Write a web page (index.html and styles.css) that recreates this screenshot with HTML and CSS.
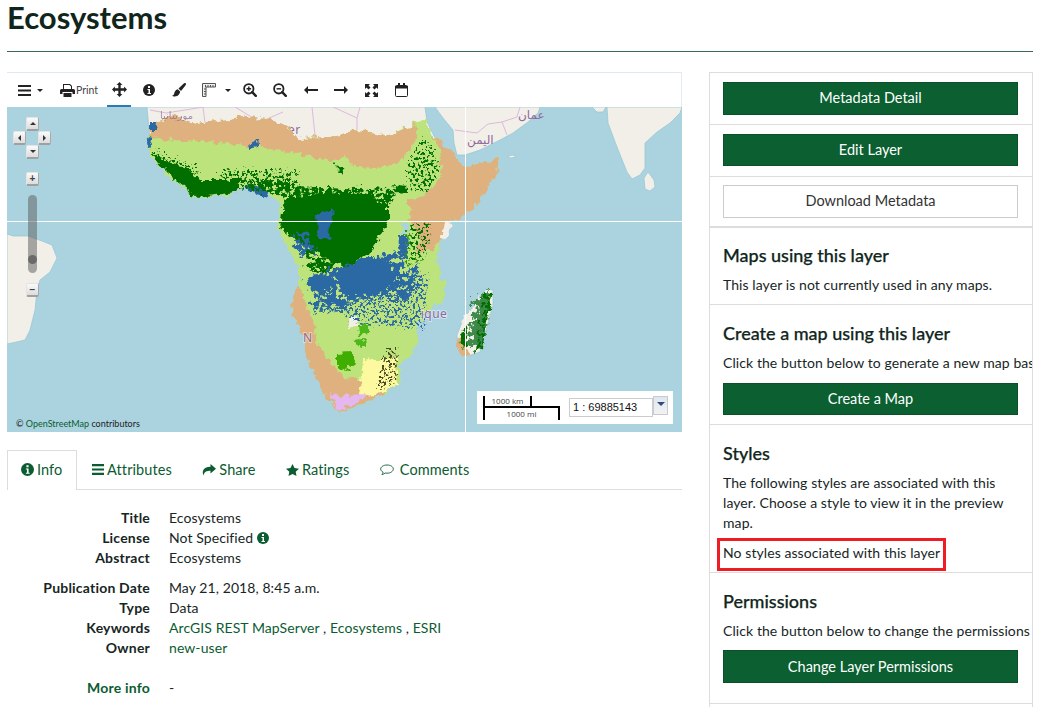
FILE: index.html
```html
<!DOCTYPE html>
<html lang="en">
<head>
<meta charset="utf-8">
<title>Ecosystems</title>
<link rel="stylesheet" href="styles.css">
</head>
<body>
<svg class="defs" width="0" height="0" aria-hidden="true">
  <defs>
    <filter id="rough" x="-5%" y="-5%" width="110%" height="110%" color-interpolation-filters="sRGB">
      <feTurbulence type="fractalNoise" baseFrequency="0.16" numOctaves="3" seed="4" result="n"/>
      <feDisplacementMap in="SourceGraphic" in2="n" scale="9" xChannelSelector="R" yChannelSelector="G"/>
    </filter>
    <filter id="mottle" x="-5%" y="-5%" width="110%" height="110%" color-interpolation-filters="sRGB">
      <feTurbulence type="fractalNoise" baseFrequency="0.22" numOctaves="3" seed="11" result="n"/>
      <feDisplacementMap in="SourceGraphic" in2="n" scale="16" xChannelSelector="R" yChannelSelector="G" result="d"/>
      <feColorMatrix in="n" type="matrix" values="0 0 0 0 0 0 0 0 0 0 0 0 0 0 0 9 9 0 0 -7.6" result="m"/>
      <feComposite in="d" in2="m" operator="in"/>
    </filter>
    <filter id="sparse" x="-5%" y="-5%" width="110%" height="110%" color-interpolation-filters="sRGB">
      <feTurbulence type="fractalNoise" baseFrequency="0.38" numOctaves="3" seed="37" result="n"/>
      <feDisplacementMap in="SourceGraphic" in2="n" scale="14" xChannelSelector="R" yChannelSelector="G" result="d"/>
      <feColorMatrix in="n" type="matrix" values="0 0 0 0 0 0 0 0 0 0 0 0 0 0 0 10 10 0 0 -10.4" result="m"/>
      <feComposite in="d" in2="m" operator="in"/>
    </filter>
  </defs>
</svg>
<header class="page-head">
  <h1>Ecosystems</h1>
</header>
<main class="content">
  <section class="left">
    <div class="toolbar">
      <span class="tool tool-menu">
        <svg width="13" height="11" viewBox="0 0 13 11"><path d="M0 0h13v2H0zM0 4.500h13v2H0zM0 9h13v2H0z" fill="#222"/></svg>
        <i class="caret"></i>
      </span>
      <span class="tool tool-print">
        <svg width="15" height="13" viewBox="0 0 15 13"><path d="M3 0h7l2 2v3H3zM4 1v4h7V2.500L9.500 1zM1.500 5h12A1.500 1.500 0 0 1 15 6.500V10h-2.500V8h-10v2H0V6.500A1.500 1.500 0 0 1 1.500 5zM3.500 9h8v4h-8z" fill="#222"/></svg>
        <span>Print</span>
      </span>
      <span class="tool active">
        <svg width="15" height="15" viewBox="0 0 14 14"><path d="M7 0l2.700 2.700H8.100V5.900h3.200V4.300L14 7l-2.700 2.700V8.100H8.100v3.200h1.600L7 14l-2.700-2.700h1.600V8.100H2.700v1.600L0 7l2.700-2.700v1.600h3.200V2.700H4.300z" fill="#222"/></svg>
      </span>
      <span class="tool">
        <svg width="12" height="12" viewBox="0 0 12 12"><circle cx="6" cy="6" r="6" fill="#222"/><path d="M5 2h2v2H5zM4.500 5H7v4h1v1H4.500V9h1V6h-1z" fill="#fff"/></svg>
      </span>
      <span class="tool">
        <svg width="14" height="14" viewBox="0 0 14 14"><path d="M13 0c.7 0 1 .5 1 1 0 .6-.4 1.200-1 2L9 8 6.500 5.500 11.500.8C12 .3 12.500 0 13 0zM5.800 6.300l2.300 2.300C7.900 11 6.300 13.500 2.800 13.500c-1.300 0-2.300-.3-2.800-.8 1.200-.2 1.800-.8 2.200-2.200.4-2 1.600-4 3.600-4.200z" fill="#222"/></svg>
      </span>
      <span class="tool tool-ruler">
        <svg width="14" height="14" viewBox="0 0 14 14"><path d="M.5.500h13v3.500H4v9.500H.5z" fill="#eee" stroke="#555"/><path d="M3.500 2v2M6 2v2M8.500 2v2M11 2v2M2 6h2M2 8.500h2M2 11h2" stroke="#555" fill="none"/></svg>
        <i class="caret"></i>
      </span>
      <span class="tool">
        <svg width="14" height="14" viewBox="0 0 14 14"><circle cx="5.800" cy="5.800" r="4.700" fill="none" stroke="#222" stroke-width="1.800"/><path d="M9.200 9.200l3.600 3.600" stroke="#222" stroke-width="2.400" stroke-linecap="round"/><path d="M3.500 5.800h4.600M5.800 3.500v4.600" stroke="#222" stroke-width="1.400"/></svg>
      </span>
      <span class="tool">
        <svg width="14" height="14" viewBox="0 0 14 14"><circle cx="5.800" cy="5.800" r="4.700" fill="none" stroke="#222" stroke-width="1.800"/><path d="M9.200 9.200l3.600 3.600" stroke="#222" stroke-width="2.400" stroke-linecap="round"/><path d="M3.500 5.800h4.600" stroke="#222" stroke-width="1.400"/></svg>
      </span>
      <span class="tool tool-shift">
        <svg width="14" height="8" viewBox="0 0 14 8"><path d="M14 3v2H4v3L0 4l4-4v3z" fill="#222"/></svg>
      </span>
      <span class="tool">
        <svg width="14" height="8" viewBox="0 0 14 8"><path d="M0 3v2h10v3l4-4-4-4v3z" fill="#222"/></svg>
      </span>
      <span class="tool">
        <svg width="13" height="13" viewBox="0 0 13 13"><path d="M0 0h5L3.500 1.500 5.500 3.500 3.500 5.500 1.500 3.500 0 5zM13 0v5l-1.500-1.500-2 2-2-2 2-2L8 0zM0 13V8l1.500 1.500 2-2 2 2-2 2L5 13zM13 13H8l1.500-1.500-2-2 2-2 2 2L13 8z" fill="#222"/></svg>
      </span>
      <span class="tool">
        <svg width="13" height="14" viewBox="0 0 13 14"><path d="M1.500 2.500h10a1 1 0 0 1 1 1v9a1 1 0 0 1-1 1h-10a1 1 0 0 1-1-1v-9a1 1 0 0 1 1-1z" fill="#fff" stroke="#222"/><path d="M0 3h13v2.500H0zM3 0h2v3.500H3zM8 0h2v3.500H8z" fill="#222"/></svg>
      </span>
    </div>

    <div class="map">
      <svg class="map-art" viewBox="7 107 675 325" width="675" height="325" aria-hidden="true">
        <rect x="7" y="107" width="675" height="325" fill="#aad3df"/>
        <!-- land base -->
        <g class="land">
          <path d="M147 107H425L427 122 436 140 420 160 300 170 180 170 150 140z"/>
          <path d="M435 107L443 118 453 130 454 143 457 155 465 155 480 150 500 140 513 133 528 122 538 113 540 107z"/>
          <path d="M592 107L597 112 603 112 606 107z"/>
          <path d="M607 107L608 123 617 147 627 172 632 179 640 175 645 168 645 143 657 132 670 123 680 113 682 107z"/>
          <path d="M644 178L648 172 654 180 655 187 650 191 645 189z"/>
          <path d="M507 156L513 155 516 157 511 158z"/>
          <path d="M7 234L13 236 28 236 42 241 52 245 57 258 50 272 40 280 37 290 35 310 30 330 25 340 12 343 7 344z"/>
          <path d="M462 322L486 289 493 290 493 305 480 352 468 356 458 350 457 335z"/>
        </g>
        <!-- borders -->
        <g class="border">
          <path d="M150 110L166 113 204 107"/>
          <path d="M203 107L205 123"/>
          <path d="M235 107L260 122 283 112"/>
          <path d="M312 107L315 135"/>
          <path d="M333 107L357 118 360 107"/>
          <path d="M357 118V130"/>
          <path d="M455 130L477 133 488 124 502 122 517 117 520 107"/>
          <path d="M502 122L507 135"/>
        </g>
        <text class="map-label" x="284" y="134" text-anchor="middle">Niger</text>
        <text class="map-label" x="467" y="144">اليمن</text>
        <text class="map-label" x="518" y="119">عمان</text>
        <!-- biomes -->
        <g filter="url(#rough)">
          <path d="M151 124L173 115 197 123 230 120 243 115 270 120 284 124 297 138 330 137 357 130 390 135 417 122 424 120 433 135 447 148 458 160 463 166 483 163 499 158 497 172 482 197 465 215 449 222 442 238 436 262 445 285 445 298 426 315 416 325 418 345 400 365 400 382 383 395 352 408 338 412 325 396 308 362 301 332 291 308 298 285 298 268 278 228 281 205 263 188 243 188 227 195 197 198 170 178 150 155 147 143z" fill="#bce37c"/>
          <path d="M151 124L173 115 197 123 230 120 243 115 270 120 284 124 297 138 330 137 357 130 390 135 415 124 418 137 410 150 397 164 375 168 352 165 345 157 330 162 297 153 263 148 200 141 163 139 148 136z" fill="#dfb17e"/>
          <path d="M432 136L449 148 458 160 463 166 483 163 499 158 497 172 482 197 465 215 449 222 442 238 432 250 416 256 420 236 412 225 408 200 425 195 442 175 440 150z" fill="#dfb17e"/>
          <path d="M291 308L298 285 304 300 315 325 318 345 332 365 345 378 370 380 395 378 383 395 352 408 338 412 325 396 308 362 301 332z" fill="#dfb17e"/>
          <path d="M458 338L466 348 472 355 462 356 456 345z" fill="#dfb17e"/>
          <path d="M445 224L452 222 444 240 440 238z" fill="#f2efe9"/>
          <path d="M401 223L408 222 408 231 402 233z" fill="#aad3df"/>
          <path d="M349 318L357 316 357 327 349 328z" fill="#f2efe9"/>
          <path d="M462 322L482 295 478 310 470 328z" fill="#f2efe9"/>
          <path d="M287 197L320 193 360 194 388 205 388 220 383 232 370 252 347 268 330 262 303 245 280 228 283 205z" fill="#006f00"/>
          <path d="M152 152L170 163 185 167 200 180 225 180 240 180 236 192 215 195 197 197 175 180 160 165z" fill="#006f00"/>
          <path d="M317 214L333 209 331 222 328 232 332 240 318 238z" fill="#2b69a4"/>
          <path d="M335 272L365 258 385 258 398 278 378 294 345 296z" fill="#2b69a4"/>
          <path d="M308 276L332 274 330 290 312 292z" fill="#2b69a4"/>
          <path d="M398 234L407 234 409 258 400 258z" fill="#2b69a4"/>
          <path d="M243 184L262 186 270 198 258 195 245 188z" fill="#2b69a4"/>
          <path d="M150 122L156 122 155 130 150 130zM149 137L154 138 150 148 146 143z" fill="#2b69a4"/>
          <path d="M250 145L257 137 258 148 249 150z" fill="#2b69a4"/>
          <path d="M393 185L408 187 408 193 395 192z" fill="#006f00"/>
          <path d="M335 164L345 168 342 174z" fill="#006f00"/>
          <path d="M363 358L395 360 397 385 375 395 357 397 362 375z" fill="#fdf9a0"/>
          <path d="M329 393L345 396 370 395 350 406 337 410z" fill="#e4b7f0"/>
          <path d="M337 353L352 352 355 362 345 371 337 366z" fill="#3fae00"/>
          <path d="M357 325L370 325 370 334 358 335z" fill="#4db81a"/>
          <path d="M354 340L364 338 365 346 358 346z" fill="#4db81a"/>
          <path d="M484 293L492 294 482 348 475 352 478 320z" fill="#006f00"/>
          <path d="M459 338L465 326 468 345 463 350z" fill="#006f00"/>
        </g>
        <g filter="url(#mottle)">
          <path d="M287 187L398 190 390 205 287 205z" fill="#006f00"/>
          <path d="M240 180L290 182 290 198 250 190z" fill="#006f00"/>
          <path d="M292 236L308 232 320 262 300 256z" fill="#2b69a4"/>
          <path d="M310 302L345 300 352 311 315 312z" fill="#2b69a4"/>
          <path d="M388 295L418 262 420 285 408 302z" fill="#2b69a4"/>
          <path d="M305 250L340 265 330 280 310 270z" fill="#006f00"/>
          <path d="M330 270L405 250 406 296 345 304 318 300 306 282z" fill="#2b69a4"/>
          <path d="M474 300L490 292 482 348 468 345z" fill="#3f8a4a"/>
        </g>
        <g filter="url(#sparse)">
          <path d="M425 138L436 152 440 175 430 192 412 192 408 170z" fill="#006f00"/>
          <path d="M425 138L436 152 440 175 430 192 412 192 408 170z" fill="#006f00"/>
          <path d="M425 138L436 152 440 175 430 192 412 192 408 170z" fill="#006f00"/>
          <path d="M406 232L428 228 424 262 408 268z" fill="#2e9a00"/>
          <path d="M410 226L432 224 428 255 414 262z" fill="#006f00"/>
          <path d="M386 350L398 350 397 385 378 392z" fill="#4a4a20"/>
          <path d="M220 170L300 172 300 192 220 190z" fill="#006f00"/>
          <path d="M330 305L430 275 425 330 360 325z" fill="#2b69a4"/>
          <path d="M152 150L200 170 200 180 160 165z" fill="#006f00"/>
        </g>
        <text class="map-label halo" x="434" y="318" text-anchor="middle">ique</text>
        <text class="map-label halo" x="303" y="342">N</text>
        <text class="map-label faint" x="160" y="119">موريتانيا</text>
        <path d="M7 221.500H682M465.500 107V432" stroke="#fff" stroke-width="1"/>
      </svg>

      <div class="pan-controls">
        <span class="olbtn up"><i class="tri tri-up"></i></span>
        <span class="olbtn left"><i class="tri tri-left"></i></span>
        <span class="olbtn right"><i class="tri tri-right"></i></span>
        <span class="olbtn down"><i class="tri tri-down"></i></span>
      </div>
      <div class="zoom-controls">
        <span class="olbtn">+</span>
        <div class="slider"><i class="knob"></i></div>
        <span class="olbtn">−</span>
      </div>
      <div class="attribution">© <a href="#">OpenStreetMap</a> contributors</div>
      <div class="scale-box">
        <div class="scale-line">
          <span class="km">1000 km</span>
          <span class="mi">1000 mi</span>
        </div>
        <div class="scale-input">1 : 69885143</div>
        <span class="scale-arrow"><i></i></span>
      </div>
    </div>

    <nav class="tabs">
      <a class="tab active" href="#">
        <svg width="13" height="13" viewBox="0 0 12 12"><circle cx="6" cy="6" r="6" fill="#0b5c31"/><path d="M5 2h2v2H5zM4.500 5H7v4h1v1H4.500V9h1V6h-1z" fill="#fff"/></svg>
        Info</a>
      <a class="tab" href="#">
        <svg width="12" height="11" viewBox="0 0 12 11"><path d="M0 0h12v2.200H0zM0 4.400h12v2.200H0zM0 8.800h12V11H0z" fill="#0b5c31"/></svg>
        Attributes</a>
      <a class="tab" href="#">
        <svg width="14" height="12" viewBox="0 0 14 12"><path d="M8.500 0L14 4.700 8.500 9.500V6.800C5 6.800 2.300 7.500 1.500 11.500 0 8.500.3 3 8.500 2.800z" fill="#0b5c31"/></svg>
        Share</a>
      <a class="tab" href="#">
        <svg width="13" height="12" viewBox="0 0 13 12"><path d="M6.500 0l2 4.100 4.500.6-3.300 3.100.8 4.200-4-2.100-4 2.100.8-4.200L0 4.700l4.500-.6z" fill="#0b5c31"/></svg>
        Ratings</a>
      <a class="tab tab-wide" href="#">
        <svg width="14" height="12" viewBox="0 0 14 12"><path d="M7 1C3.500 1 .7 2.800.7 5c0 1.300 1 2.400 2.400 3.200-.1.900-.6 1.700-1.200 2.300 1.300-.1 2.500-.7 3.300-1.500.6.100 1.200.2 1.800.2 3.500 0 6.300-1.900 6.300-4.200S10.500 1 7 1z" fill="none" stroke="#0b5c31" stroke-width=".9"/></svg>
        Comments</a>
    </nav>

    <dl class="info">
      <dt>Title</dt><dd>Ecosystems</dd>
      <dt>License</dt><dd>Not Specified <svg class="inline-icon" width="12" height="12" viewBox="0 0 12 12"><circle cx="6" cy="6" r="6" fill="#0b5c31"/><path d="M5 2h2v2H5zM4.500 5H7v4h1v1H4.500V9h1V6h-1z" fill="#fff"/></svg></dd>
      <dt>Abstract</dt><dd>Ecosystems</dd>
      <dt class="group">Publication Date</dt><dd class="group">May 21, 2018, 8:45 a.m.</dd>
      <dt>Type</dt><dd>Data</dd>
      <dt>Keywords</dt><dd><a href="#">ArcGIS REST MapServer</a> , <a href="#">Ecosystems</a> , <a href="#">ESRI</a></dd>
      <dt>Owner</dt><dd><a href="#">new-user</a></dd>
      <dt class="more"><a href="#">More info</a></dt><dd class="more">-</dd>
    </dl>
  </section>

  <aside class="side">
    <div class="side-row"><a class="btn primary tall" href="#">Metadata Detail</a></div>
    <div class="side-row"><a class="btn primary" href="#">Edit Layer</a></div>
    <div class="side-row thick"><a class="btn outline tall" href="#">Download Metadata</a></div>
    <div class="side-block first">
      <h3>Maps using this layer</h3>
      <p>This layer is not currently used in any maps.</p>
    </div>
    <div class="side-block">
      <h3>Create a map using this layer</h3>
      <p class="clip">Click the button below to generate a new map based on this layer.</p>
      <a class="btn primary" href="#">Create a Map</a>
    </div>
    <div class="side-block">
      <h3>Styles</h3>
      <p>The following styles are associated with this layer. Choose a style to view it in the preview map.</p>
      <p class="flagged">No styles associated with this layer</p>
    </div>
    <div class="side-block last">
      <h3>Permissions</h3>
      <p class="clip tight">Click the button below to change the permissions of this layer.</p>
      <a class="btn primary tall" href="#">Change Layer Permissions</a>
    </div>
  </aside>
</main>
</body>
</html>
```

FILE: styles.css
```css
* { box-sizing: border-box; }
html, body { height: 100%; overflow: hidden; }
body {
  margin: 0;
  background: #fff;
  color: #17261f;
  font-family: Lato, "Liberation Sans", sans-serif;
  font-size: 14px;
  line-height: 20px;
  letter-spacing: .08px;
}
a { color: #0b5c31; text-decoration: none; }
.defs { position: absolute; }

.page-head {
  margin: 0 11px 0 7px;
  height: 52px;
  border-bottom: 1px solid #3a6b52;
}
h1 {
  margin: 0;
  font-size: 31px;
  font-weight: 700;
  line-height: 35px;
  letter-spacing: 0;
  color: #10261b;
}

.content {
  display: flex;
  align-items: flex-start;
  padding: 20px 11px 0 7px;
  gap: 27px;
}
.left { width: 675px; flex: none; }

.toolbar {
  display: flex;
  height: 35px;
  padding-left: 11px;
  align-items: center;
  border-top: 1px solid #dce8f2;
  border-right: 1px solid #e3ebf3;
}
.tool {
  width: 30px;
  height: 34px;
  display: flex;
  align-items: center;
  justify-content: center;
  flex: none;
}
.tool-menu { width: 42px; justify-content: flex-start; gap: 6px; }
.tool-print { width: 44px; justify-content: flex-start; gap: 1px; color: #444; font-size: 10.500px; letter-spacing: 0; }
.tool-ruler { width: 41px; justify-content: flex-start; padding-left: 8px; gap: 9px; }
.tool-shift { margin-left: 1px; }
.tool.active { width: 24px; margin: 0 3px; border-bottom: 2px solid #2b7ab8; }
.caret {
  width: 0; height: 0;
  border: 3px solid transparent;
  border-top-color: #222;
  border-bottom: 0;
}

.map { position: relative; height: 325px; overflow: hidden; }
.map-art { display: block; }
.land { fill: #f2efe9; stroke: #93c6d4; stroke-width: .7; }
.border { fill: none; stroke: #dcb9dc; stroke-width: 1; }
.map-label { font: 12px "Noto Sans", "DejaVu Sans", sans-serif; fill: #8f6a9c; letter-spacing: .4px; }
.faint { font-size: 10px; opacity: .75; }
.halo { paint-order: stroke; stroke: rgba(255,255,255,.45); stroke-width: 2px; }

.pan-controls { position: absolute; left: 6px; top: 10px; width: 38px; height: 42px; }
.olbtn {
  display: flex;
  align-items: center;
  justify-content: center;
  width: 13px;
  height: 14px;
  background: linear-gradient(#fafafa, #dcdcdc);
  border: 1px solid #e4e4e4;
  border-right-color: #a9a9a9;
  border-bottom: 2px solid #a0a0a0;
  border-radius: 2px;
  font: 700 10px/10px "Liberation Sans", sans-serif;
  color: #444;
  flex: none;
}
.pan-controls .olbtn { position: absolute; }
.up { left: 13px; top: 0; }
.olbtn.left { left: 0; top: 14px; width: 13px; }
.olbtn.right { left: 25px; top: 14px; }
.down { left: 13px; top: 28px; }
.tri { width: 0; height: 0; border: 3px solid transparent; }
.tri-up { border-bottom-color: #333; border-top: 0; }
.tri-down { border-top-color: #333; border-bottom: 0; }
.tri-left { border-right-color: #333; border-left: 0; }
.tri-right { border-left-color: #333; border-right: 0; }

.zoom-controls {
  position: absolute;
  left: 19px;
  top: 65px;
  width: 13px;
  display: flex;
  flex-direction: column;
  align-items: center;
  gap: 9px;
}
.slider {
  position: relative;
  width: 9px;
  height: 78px;
  margin-bottom: 1px;
  border-radius: 5px;
  background: rgba(90, 90, 90, .5);
}
.knob {
  position: absolute;
  left: 0;
  top: 60px;
  width: 9px;
  height: 9px;
  border-radius: 50%;
  background: #6a6a6a;
}

.attribution {
  position: absolute;
  left: 9px;
  bottom: 3px;
  font-size: 9px;
  line-height: 11px;
  letter-spacing: 0;
  color: #222;
}

.scale-box {
  position: absolute;
  left: 470px;
  top: 284px;
  width: 196px;
  height: 33px;
  background: #fff;
  display: flex;
  align-items: flex-start;
}
.scale-line {
  position: relative;
  width: 77px;
  height: 24px;
  margin: 5px 0 0 6px;
  border-left: 2px solid #000;
  font: 8px/10px "Open Sans", sans-serif;
  letter-spacing: 0;
  color: #444;
  flex: none;
}
.scale-line::before {
  content: "";
  position: absolute;
  left: 0; right: 0; top: 10px;
  border-top: 2px solid #000;
}
.km {
  position: absolute;
  left: 0; width: 47px; top: 0; height: 11px;
  text-align: center;
  border-right: 2px solid #000;
}
.mi {
  position: absolute;
  right: 0; top: 12px; width: 75px; height: 12px;
  padding-top: 1px;
  text-align: center;
  border-right: 2px solid #000;
}
.scale-input {
  width: 84px;
  height: 19px;
  margin: 7px 0 0 9px;
  padding-left: 3px;
  border: 1px solid #ccc;
  font: 11px/17px "Liberation Sans", sans-serif;
  letter-spacing: 0;
  color: #111;
  flex: none;
}
.scale-arrow {
  width: 15px;
  height: 19px;
  margin-top: 5px;
  background: linear-gradient(#dfe6ef, #f2f2f2);
  border: 1px solid #c9c9d2;
  display: flex;
  align-items: center;
  justify-content: center;
  flex: none;
}
.scale-arrow i {
  width: 0; height: 0;
  margin-bottom: 4px;
  border: 4px solid transparent;
  border-top: 4px solid #2c4a7c;
  border-bottom: 0;
}

.tabs {
  display: flex;
  margin-top: 18px;
  height: 40px;
  border-bottom: 1px solid #ddd;
  font-size: 14.500px;
}
.tab {
  display: flex;
  align-items: center;
  gap: 3px;
  padding: 0 14.800px 2px;
  height: 40px;
  color: #0b5c31;
  border: 1px solid transparent;
  border-bottom: 0;
}
.tab + .tab { margin-left: -1px; }
.tab-wide { gap: 6px; }
.tab.active {
  border-color: #ddd;
  background: #fff;
  padding: 0 14px 2px 13px;
}

.info {
  display: grid;
  grid-template-columns: 143px 1fr;
  column-gap: 19px;
  margin: 18px 0 0;
}
.info dt { font-weight: 700; text-align: right; letter-spacing: .2px; }
.info dd { margin: 0; }
.info .group { margin-top: 10px; }
.info .more { margin-top: 20px; }
.inline-icon { vertical-align: -1px; }

.side {
  width: 324px;
  flex: none;
  border: 1px solid #ddd;
  border-bottom: 0;
  overflow: hidden;
  height: 640px;
}
.side-row {
  padding: 9px 14px 0 13px;
  height: 52px;
  border-bottom: 1px solid #ddd;
}
.side-row.thick { height: 51px; border-bottom-width: 2px; padding-top: 8px; }
.btn {
  display: block;
  height: 32px;
  text-align: center;
  font-size: 14.500px;
  line-height: 30px;
  border: 1px solid transparent;
  letter-spacing: 0;
}
.btn.tall { height: 33px; }
.primary { background: #0b5f30; border-color: #0a5029; color: #fff; }
.outline { background: #fff; border-color: #ccc; color: #333; }
.side-block {
  padding: 14px 14px 9px 13px;
  border-bottom: 1px solid #ddd;
}
.side-block.first { padding-top: 13px; }
.side-block.last { padding-bottom: 20px; }
.side-block.last .btn { line-height: 32px; }
.side-block h3 {
  margin: 0 0 6px;
  font-size: 18px;
  line-height: 28px;
  font-weight: 500;
  letter-spacing: 0;
  color: #10261b;
  -webkit-text-stroke: .25px #10261b;
}
.side-block p { margin: 0; }
.side-block .clip { white-space: nowrap; margin-bottom: 10px; }
.side-block .tight { margin-bottom: 9px; }
.side-block .flagged {
  position: relative;
  margin-top: 10px;
  white-space: nowrap;
}
.flagged::after {
  content: "";
  box-sizing: border-box;
  position: absolute;
  left: -6px;
  top: -5px;
  width: 229px;
  height: 33px;
  border: 3px solid #ee1c25;
}
```
